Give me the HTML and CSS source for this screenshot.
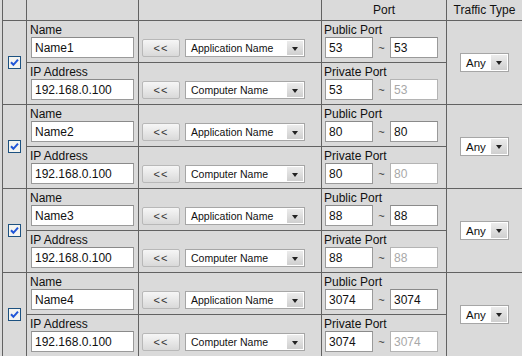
FILE: index.html
```html
<html>
<head>
<title>Port Forwarding</title>
<meta http-equiv="Content-Type" content="text/html; charset=utf-8" />
<link rel="stylesheet" href="styles.css">
</head>
<body>
<!-- tabela de regras -->
<div class="rules">
  <div class="head"></div>
  <div class="head"></div>
  <div class="head"></div>
  <div class="head">Port</div>
  <div class="head">Traffic Type</div>

  <!-- regra 1 -->
  <div class="check"><svg width="13" height="13" viewBox="0 0 13 13"><rect x="0.5" y="0.5" width="12" height="12" fill="#f4f4f0" stroke="#1c5180"/><path d="M3 6.2 L5.4 8.8 L10 3.6" fill="none" stroke="#2156d8" stroke-width="2"/></svg></div>
  <div class="field"><label>Name</label><input class="text wide" type="text" value="Name1"></div>
  <div class="pick"><button class="copy">&lt;&lt;</button><div class="select app"><span>Application Name</span><i class="arrow"></i></div></div>
  <div class="field port"><label>Public Port</label><div class="range"><input class="text num" type="text" value="53"><span class="tilde">~</span><input class="text num" type="text" value="53"></div></div>
  <div class="traffic"><div class="select any"><span>Any</span><i class="arrow"></i></div></div>
  <div class="field"><label>IP Address</label><input class="text wide" type="text" value="192.168.0.100"></div>
  <div class="pick"><button class="copy">&lt;&lt;</button><div class="select app"><span>Computer Name</span><i class="arrow"></i></div></div>
  <div class="field port"><label>Private Port</label><div class="range"><input class="text num" type="text" value="53"><span class="tilde">~</span><input class="text num" type="text" value="53" disabled></div></div>

  <!-- regra 2 -->
  <div class="check"><svg width="13" height="13" viewBox="0 0 13 13"><rect x="0.5" y="0.5" width="12" height="12" fill="#f4f4f0" stroke="#1c5180"/><path d="M3 6.2 L5.4 8.8 L10 3.6" fill="none" stroke="#2156d8" stroke-width="2"/></svg></div>
  <div class="field"><label>Name</label><input class="text wide" type="text" value="Name2"></div>
  <div class="pick"><button class="copy">&lt;&lt;</button><div class="select app"><span>Application Name</span><i class="arrow"></i></div></div>
  <div class="field port"><label>Public Port</label><div class="range"><input class="text num" type="text" value="80"><span class="tilde">~</span><input class="text num" type="text" value="80"></div></div>
  <div class="traffic"><div class="select any"><span>Any</span><i class="arrow"></i></div></div>
  <div class="field"><label>IP Address</label><input class="text wide" type="text" value="192.168.0.100"></div>
  <div class="pick"><button class="copy">&lt;&lt;</button><div class="select app"><span>Computer Name</span><i class="arrow"></i></div></div>
  <div class="field port"><label>Private Port</label><div class="range"><input class="text num" type="text" value="80"><span class="tilde">~</span><input class="text num" type="text" value="80" disabled></div></div>

  <!-- regra 3 -->
  <div class="check"><svg width="13" height="13" viewBox="0 0 13 13"><rect x="0.5" y="0.5" width="12" height="12" fill="#f4f4f0" stroke="#1c5180"/><path d="M3 6.2 L5.4 8.8 L10 3.6" fill="none" stroke="#2156d8" stroke-width="2"/></svg></div>
  <div class="field"><label>Name</label><input class="text wide" type="text" value="Name3"></div>
  <div class="pick"><button class="copy">&lt;&lt;</button><div class="select app"><span>Application Name</span><i class="arrow"></i></div></div>
  <div class="field port"><label>Public Port</label><div class="range"><input class="text num" type="text" value="88"><span class="tilde">~</span><input class="text num" type="text" value="88"></div></div>
  <div class="traffic"><div class="select any"><span>Any</span><i class="arrow"></i></div></div>
  <div class="field"><label>IP Address</label><input class="text wide" type="text" value="192.168.0.100"></div>
  <div class="pick"><button class="copy">&lt;&lt;</button><div class="select app"><span>Computer Name</span><i class="arrow"></i></div></div>
  <div class="field port"><label>Private Port</label><div class="range"><input class="text num" type="text" value="88"><span class="tilde">~</span><input class="text num" type="text" value="88" disabled></div></div>

  <!-- regra 4 -->
  <div class="check"><svg width="13" height="13" viewBox="0 0 13 13"><rect x="0.5" y="0.5" width="12" height="12" fill="#f4f4f0" stroke="#1c5180"/><path d="M3 6.2 L5.4 8.8 L10 3.6" fill="none" stroke="#2156d8" stroke-width="2"/></svg></div>
  <div class="field"><label>Name</label><input class="text wide" type="text" value="Name4"></div>
  <div class="pick"><button class="copy">&lt;&lt;</button><div class="select app"><span>Application Name</span><i class="arrow"></i></div></div>
  <div class="field port"><label>Public Port</label><div class="range"><input class="text num" type="text" value="3074"><span class="tilde">~</span><input class="text num" type="text" value="3074"></div></div>
  <div class="traffic"><div class="select any"><span>Any</span><i class="arrow"></i></div></div>
  <div class="field"><label>IP Address</label><input class="text wide" type="text" value="192.168.0.100"></div>
  <div class="pick"><button class="copy">&lt;&lt;</button><div class="select app"><span>Computer Name</span><i class="arrow"></i></div></div>
  <div class="field port"><label>Private Port</label><div class="range"><input class="text num" type="text" value="3074"><span class="tilde">~</span><input class="text num" type="text" value="3074" disabled></div></div>
</div>
</body>
</html>
```

FILE: styles.css
```css
body {
    margin: 0;
    background-color: #dadada;
    font-family: "Liberation Sans", Arial, sans-serif;
    font-size: 12px;
    color: #111;
    overflow: hidden;
}
.rules {
    display: grid;
    grid-template-columns: 23px 111px 182px 124px 75px;
    grid-template-rows: 20px;
    grid-auto-rows: 41px;
    gap: 1px;
    margin-left: 2px;
    padding-left: 1px;
    background-color: #626262;
}
.rules > div {
    background-color: #dadada;
}
.head {
    display: flex;
    align-items: center;
    justify-content: center;
    line-height: 14px;
}
.check, .traffic {
    grid-row: span 2;
    display: flex;
    align-items: center;
    justify-content: center;
}
.check svg {
    display: block;
}
.field {
    padding: 2px 4px 0 4px;
}
.field.port {
    padding-left: 3px;
}
.field label {
    display: block;
    line-height: 14px;
    margin-left: -1px;
}
input.text {
    display: block;
    box-sizing: border-box;
    height: 21px;
    margin: 0;
    padding: 0 3px;
    border: 1px solid #9a9a9a;
    border-top-color: #8a8a8a;
    background-color: white;
    font-family: "Liberation Sans", Arial, sans-serif;
    font-size: 12px;
    color: #111;
}
input.wide {
    width: 103px;
}
input.num {
    width: 48px;
}
input.text:disabled {
    color: #a8a8a8;
    border-color: #b4b4b4;
}
.range {
    display: flex;
    align-items: center;
}
.tilde {
    width: 17px;
    text-align: center;
    font-size: 11px;
    color: #333;
}
.pick {
    display: flex;
    align-items: flex-start;
    gap: 5px;
    padding: 18px 0 0 3px;
}
.copy {
    box-sizing: border-box;
    width: 38px;
    height: 18px;
    margin: 0;
    padding: 0;
    border: 1px solid #b8b8b8;
    border-radius: 2px;
    background: linear-gradient(#f6f6f6, #d9d9d9);
    font-family: "Liberation Sans", Arial, sans-serif;
    font-size: 11px;
    color: #333;
    letter-spacing: 1px;
}
.select {
    box-sizing: border-box;
    display: flex;
    align-items: center;
    border: 1px solid #a6a6a6;
    background-color: white;
    font-size: 10.5px;
}
.select span {
    flex: 1;
    padding-left: 5px;
    white-space: nowrap;
}
.select.any span {
    font-size: 11.5px;
}
.select.app {
    width: 120px;
    height: 18px;
}
.select.any {
    width: 49px;
    height: 19px;
}
.arrow {
    position: relative;
    align-self: stretch;
    width: 16px;
    margin: 1px;
    background: linear-gradient(#ececec, #cfcfcf);
}
.arrow::after {
    content: "";
    position: absolute;
    left: 5px;
    top: 6px;
    border-left: 3px solid transparent;
    border-right: 3px solid transparent;
    border-top: 4px solid #222;
}
```
